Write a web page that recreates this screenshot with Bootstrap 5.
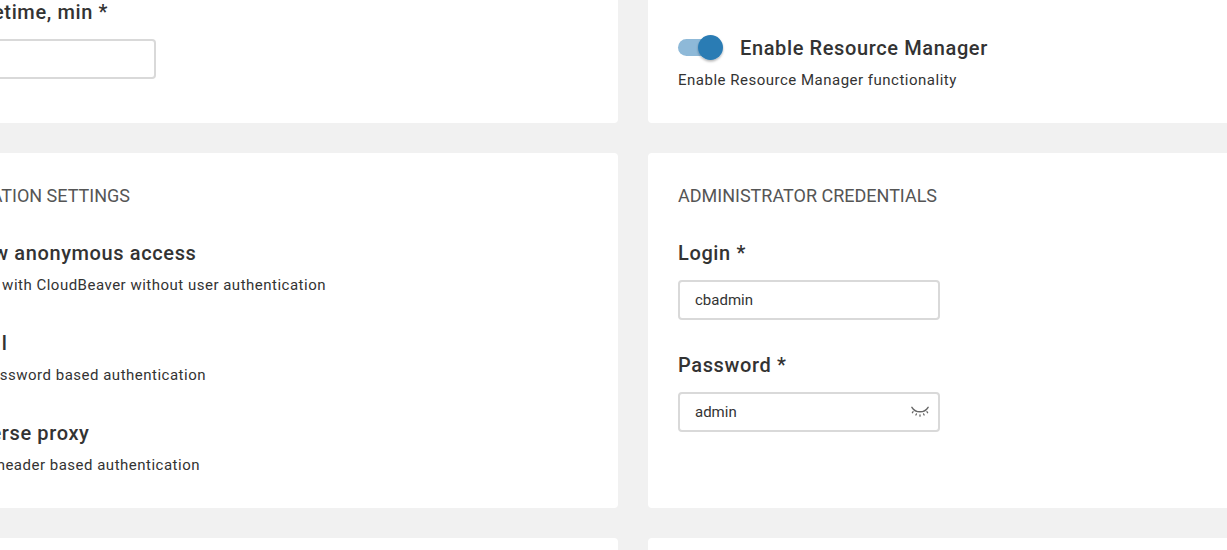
<!DOCTYPE html>
<html lang="en">
<head>
<meta charset="utf-8">
<meta name="viewport" content="width=device-width, initial-scale=1">
<title>Server configuration</title>
<link href="https://cdn.jsdelivr.net/npm/bootstrap@5.3.0/dist/css/bootstrap.min.css" rel="stylesheet">
<style>
body{height:550px;background:#f1f1f1;color:#333;font-family:Roboto,"Liberation Sans",sans-serif;font-size:15px}
.settings{display:grid;grid-template-columns:618px 579px;grid-template-rows:123px 355px 12px;gap:30px;height:550px}
.panel{background:#fff;overflow:hidden}
.panel-start{border-radius:0 4px 4px 0}
.panel-end{border-radius:4px 0 0 4px;padding-left:30px}
.panel-top{border-top-left-radius:0;border-top-right-radius:0}
.panel-bottom{border-bottom-left-radius:0;border-bottom-right-radius:0}
.section-title{font-size:18px;line-height:24px;font-weight:400;color:#555;margin:31px 0 33px}
.field-title{font-size:20px;line-height:24px;font-weight:500;letter-spacing:.62px}
.hint{font-size:15px;line-height:20px;letter-spacing:.5px;margin-top:10px}
.hint + .field-title{margin-top:36px}
.field + .field-title{margin-top:33px}
.cut{display:flex;justify-content:flex-end}
.field{height:40px;width:262px;border:2px solid #d9d9d9;border-radius:4px;padding:0 9px 0 15px;margin-top:15px}
.field-cut{width:156px;border-left:0;border-radius:0 4px 4px 0}
.switch-row{margin-top:35px;height:25px;gap:17px}
.toggle{width:45px;height:25px}
.w-lifetime{width:108px}.w-auth{width:130px}.w-anon{width:196.500px}.w-anon-hint{width:326px}
.w-local{width:7.500px}.w-local-hint{width:206px}.w-proxy{width:89.500px}.w-proxy-hint{width:200px}
</style>
</head>
<body class="overflow-hidden">
<main class="settings text-nowrap">
  <section class="panel panel-start panel-top">
    <div class="field-title cut w-lifetime">etime, min *</div>
    <div class="field field-cut"></div>
  </section>
  <section class="panel panel-end panel-top">
    <div class="d-flex align-items-center switch-row">
      <svg class="toggle overflow-visible" viewBox="0 0 45 25" aria-hidden="true"><defs><filter id="s" x="-30%" y="-30%" width="160%" height="170%"><feDropShadow dx="0" dy="1.5" stdDeviation="1.2" flood-opacity=".3"/></filter></defs><rect y="4" width="40" height="17" rx="8.5" fill="#8eb9d8"/><circle cx="32.5" cy="12.5" r="12.5" fill="#2a7cb4" filter="url(#s)"/></svg>
      <span class="field-title">Enable Resource Manager</span>
    </div>
    <div class="hint">Enable Resource Manager functionality</div>
  </section>
  <section class="panel panel-start">
    <h2 class="section-title cut w-auth">ATION SETTINGS</h2>
    <div class="field-title cut w-anon">w anonymous access</div>
    <div class="hint cut w-anon-hint">with CloudBeaver without user authentication</div>
    <div class="field-title cut w-local">l</div>
    <div class="hint cut w-local-hint">ssword based authentication</div>
    <div class="field-title cut w-proxy">erse proxy</div>
    <div class="hint cut w-proxy-hint">header based authentication</div>
  </section>
  <section class="panel panel-end">
    <h2 class="section-title">ADMINISTRATOR CREDENTIALS</h2>
    <div class="field-title">Login *</div>
    <div class="field d-flex align-items-center">cbadmin</div>
    <div class="field-title">Password *</div>
    <div class="field d-flex align-items-center justify-content-between"><span>admin</span>
      <svg width="18" height="12" viewBox="0 0 18 12" fill="none" stroke="#666" stroke-linecap="round" aria-hidden="true"><path stroke-width="1.4" d="M.9 1.3C4.500 7.300 13.500 7.300 17.100 1.300"/><path stroke-width="1.300" d="M2.100 5.700 1.400 6.700M5.400 7.900 4.900 9M9 8.900V10.200M12.600 7.900 13.100 9M15.900 5.700 16.600 6.700"/></svg>
    </div>
  </section>
  <section class="panel panel-start panel-bottom"></section>
  <section class="panel panel-end panel-bottom"></section>
</main>
<script src="https://cdn.jsdelivr.net/npm/bootstrap@5.3.0/dist/js/bootstrap.bundle.min.js"></script>
</body>
</html>
